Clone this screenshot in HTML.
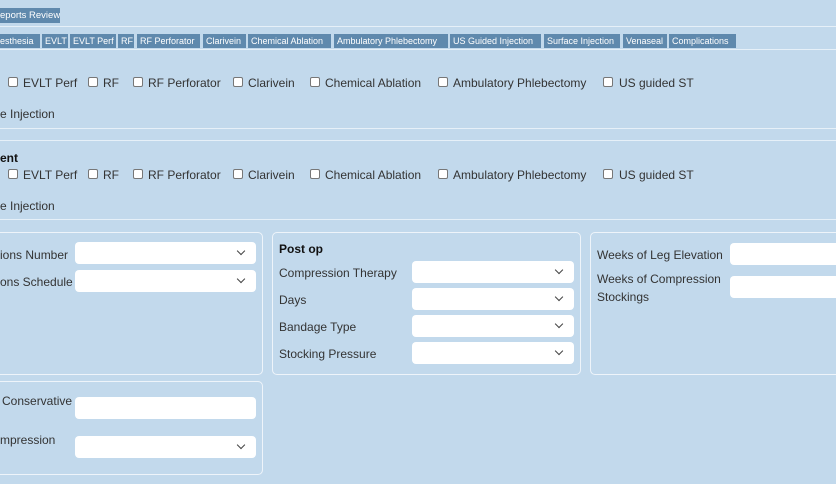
<!DOCTYPE html>
<html><head><style>
*{margin:0;padding:0;box-sizing:border-box}
body{width:836px;height:484px;background:#c2d9ec;font-family:"Liberation Sans",sans-serif;color:#333;position:relative;overflow:hidden}
.a{position:absolute;white-space:nowrap}
.t{font-size:12px;color:#333}
.line{position:absolute;left:0;width:836px;height:1px;background:#e6f0f8}
.tab{position:absolute;top:34px;height:14px;background:#5f89ad;color:#fff;font-size:9px;line-height:14px;padding-left:3px;white-space:nowrap;overflow:hidden}
.cb{position:absolute;width:10px;height:10px;background:#fff;border:1px solid #777;border-radius:2px}
.pn{position:absolute;border:1px solid #eef4fa;border-radius:5px}
.sel{position:absolute;background:#fff;border-radius:4px;height:22px}
.sel:after{content:"";position:absolute;right:12px;top:6px;width:5px;height:5px;border-right:1.3px solid #444;border-bottom:1.3px solid #444;transform:rotate(45deg)}
.inp{position:absolute;background:#fff;border-radius:4px;height:22px}
b{font-weight:bold;color:#111}
</style></head><body>
<div class="tab" style="top:8px;height:15px;line-height:15px;left:0;width:60px;padding-left:0;font-size:9.5px">eports Review</div>
<div class="line" style="top:26px"></div>
<div class="tab" style="left:0;width:40px;padding-left:0">esthesia</div>
<div class="tab" style="left:42px;width:26px">EVLT</div>
<div class="tab" style="left:70px;width:46px">EVLT Perf</div>
<div class="tab" style="left:118px;width:16px">RF</div>
<div class="tab" style="left:137px;width:63px">RF Perforator</div>
<div class="tab" style="left:203px;width:43px">Clarivein</div>
<div class="tab" style="left:248px;width:83px">Chemical Ablation</div>
<div class="tab" style="left:334px;width:114px">Ambulatory Phlebectomy</div>
<div class="tab" style="left:450px;width:91px">US Guided Injection</div>
<div class="tab" style="left:544px;width:76px">Surface Injection</div>
<div class="tab" style="left:623px;width:44px">Venaseal</div>
<div class="tab" style="left:669px;width:67px">Complications</div>
<div class="line" style="top:49px"></div>

<div class="cb" style="left:8px;top:77px"></div><div class="a t" style="left:23px;top:76px">EVLT Perf</div>
<div class="cb" style="left:88px;top:77px"></div><div class="a t" style="left:103px;top:76px">RF</div>
<div class="cb" style="left:133px;top:77px"></div><div class="a t" style="left:148px;top:76px">RF Perforator</div>
<div class="cb" style="left:233px;top:77px"></div><div class="a t" style="left:248px;top:76px">Clarivein</div>
<div class="cb" style="left:310px;top:77px"></div><div class="a t" style="left:325px;top:76px">Chemical Ablation</div>
<div class="cb" style="left:438px;top:77px"></div><div class="a t" style="left:453px;top:76px">Ambulatory Phlebectomy</div>
<div class="cb" style="left:603px;top:77px"></div><div class="a t" style="left:619px;top:76px">US guided ST</div>
<div class="a t" style="left:0;top:107px">e Injection</div>
<div class="line" style="top:128px"></div>
<div class="line" style="top:140px"></div>
<div class="a t" style="left:0;top:151px"><b>ent</b></div>
<div class="cb" style="left:8px;top:169px"></div><div class="a t" style="left:23px;top:168px">EVLT Perf</div>
<div class="cb" style="left:88px;top:169px"></div><div class="a t" style="left:103px;top:168px">RF</div>
<div class="cb" style="left:133px;top:169px"></div><div class="a t" style="left:148px;top:168px">RF Perforator</div>
<div class="cb" style="left:233px;top:169px"></div><div class="a t" style="left:248px;top:168px">Clarivein</div>
<div class="cb" style="left:310px;top:169px"></div><div class="a t" style="left:325px;top:168px">Chemical Ablation</div>
<div class="cb" style="left:438px;top:169px"></div><div class="a t" style="left:453px;top:168px">Ambulatory Phlebectomy</div>
<div class="cb" style="left:603px;top:169px"></div><div class="a t" style="left:619px;top:168px">US guided ST</div>
<div class="a t" style="left:0;top:199px">e Injection</div>
<div class="line" style="top:219px"></div>

<div class="pn" style="left:-10px;top:232px;width:273px;height:143px"></div>
<div class="a t" style="left:0;top:248px">ions Number</div>
<div class="sel" style="left:75px;top:242px;width:181px"></div>
<div class="a t" style="left:0;top:275px">ons Schedule</div>
<div class="sel" style="left:75px;top:270px;width:181px"></div>

<div class="pn" style="left:272px;top:232px;width:309px;height:143px"></div>
<div class="a t" style="left:279px;top:242px"><b>Post op</b></div>
<div class="a t" style="left:279px;top:266px">Compression Therapy</div>
<div class="a t" style="left:279px;top:293px">Days</div>
<div class="a t" style="left:279px;top:320px">Bandage Type</div>
<div class="a t" style="left:279px;top:347px">Stocking Pressure</div>
<div class="sel" style="left:412px;top:261px;width:162px"></div>
<div class="sel" style="left:412px;top:288px;width:162px"></div>
<div class="sel" style="left:412px;top:315px;width:162px"></div>
<div class="sel" style="left:412px;top:342px;width:162px"></div>

<div class="pn" style="left:590px;top:232px;width:260px;height:143px"></div>
<div class="a t" style="left:597px;top:248px">Weeks of Leg Elevation</div>
<div class="a t" style="left:597px;top:272px">Weeks of Compression</div>
<div class="a t" style="left:597px;top:290px">Stockings</div>
<div class="inp" style="left:730px;top:243px;width:120px"></div>
<div class="inp" style="left:730px;top:276px;width:120px"></div>

<div class="pn" style="left:-10px;top:381px;width:273px;height:94px"></div>
<div class="a t" style="left:2px;top:394px">Conservative</div>
<div class="inp" style="left:75px;top:397px;width:181px"></div>
<div class="a t" style="left:0;top:433px">mpression</div>
<div class="sel" style="left:75px;top:436px;width:181px"></div>
</body></html>
